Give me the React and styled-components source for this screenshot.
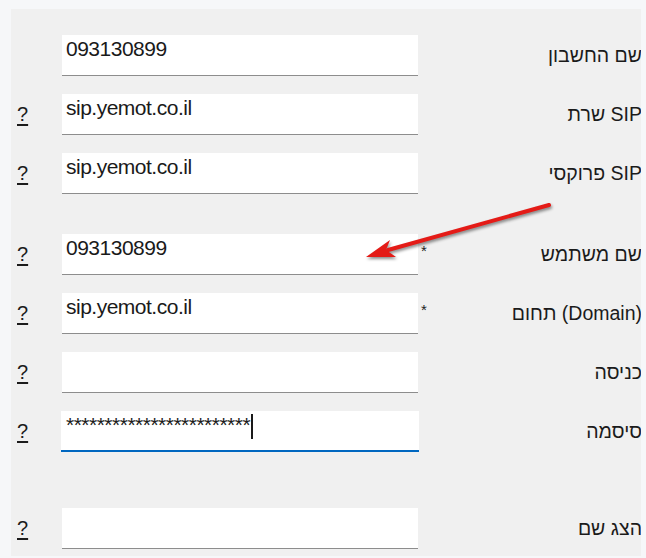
import React from 'react';
import styled, { createGlobalStyle } from 'styled-components';

const Global = createGlobalStyle`
  html, body {
    margin: 0;
    padding: 0;
    background: #f6f7f9;
    font-family: "Liberation Sans", Arial, sans-serif;
  }
  body {
    width: 646px;
    height: 558px;
    overflow: hidden;
  }
`;

const Page = styled.div`
  position: relative;
  width: 646px;
  height: 558px;
  padding: 9px 5px 2px 11px;
  box-sizing: border-box;
`;

const Panel = styled.div`
  height: 100%;
  background: #f0f0f0;
  overflow: hidden;
  padding-top: 26px;
  box-sizing: border-box;
  display: flex;
  flex-direction: column;
  gap: 18px;
`;

const Row = styled.div`
  display: grid;
  grid-template-columns: 51px 356px 22px 1fr;
  align-items: center;
  height: 41px;
  margin-top: ${p => p.$extra || 0}px;
`;

const Help = styled.span`
  padding-left: 6px;
  font-size: 20px;
  color: #1b1b1b;
  text-decoration: underline;
  text-underline-offset: 3px;
  visibility: ${p => (p.$hidden ? 'hidden' : 'visible')};
`;

const Field = styled.div`
  position: relative;
  height: 100%;
  box-sizing: border-box;
  background: #fff;
  border-bottom: ${p => (p.$focused ? '2px solid #0067c0' : '1px solid #8d8d8d')};
  margin: ${p => (p.$focused ? '0 -1px' : '0')};
  padding: 2px 4px 0 ${p => (p.$focused ? 5 : 4)}px;
  font-size: 21px;
  letter-spacing: -0.5px;
  color: #1a1a1a;
  white-space: nowrap;
  display: flex;
  align-items: flex-start;
`;

const Caret = styled.span`
  display: inline-block;
  width: 2px;
  height: 25px;
  margin-left: 1px;
  margin-top: 1px;
  background: #1a1a1a;
`;

const Star = styled.span`
  align-self: start;
  padding: 8px 0 0 3px;
  font-size: 15px;
  color: #222;
`;

const Label = styled.span`
  direction: ltr;
  text-align: right;
  font-size: 19.5px;
  color: #1b1b1b;
  white-space: nowrap;
  margin-right: -1px;
`;

const Arrow = styled.svg`
  position: absolute;
  left: 0;
  top: 0;
  pointer-events: none;
  filter: drop-shadow(1px 2px 1.5px rgba(0, 0, 0, 0.45));
`;

const rows = [
  { label: 'שם החשבון', value: '093130899', help: false },
  { label: 'שרת SIP', value: 'sip.yemot.co.il', help: true },
  { label: 'פרוקסי SIP', value: 'sip.yemot.co.il', help: true },
  { label: 'שם משתמש', value: '093130899', help: true, star: true, extra: 22 },
  { label: 'תחום (Domain)', value: 'sip.yemot.co.il', help: true, star: true },
  { label: 'כניסה', value: '', help: true },
  { label: 'סיסמה', value: '*'.repeat(24), help: true, focused: true },
  { label: 'הצג שם', value: '', help: true, extra: 38 },
];

export default function App() {
  return (
    <Page>
      <Global />
      <Panel>
        {rows.map(r => (
          <Row key={r.label} $extra={r.extra}>
            <Help $hidden={!r.help}>?</Help>
            <Field $focused={r.focused}>
              {r.value}
              {r.focused && <Caret />}
            </Field>
            <Star>{r.star ? '*' : ''}</Star>
            <Label>{r.label}</Label>
          </Row>
        ))}
      </Panel>
      <Arrow width="646" height="558" viewBox="0 0 646 558">
        <line x1="549" y1="205" x2="388" y2="250" stroke="#e41b17" strokeWidth="4" strokeLinecap="round" />
        <polygon points="366,257 390,240 386,250 396,257" fill="#e41b17" />
      </Arrow>
    </Page>
  );
}
